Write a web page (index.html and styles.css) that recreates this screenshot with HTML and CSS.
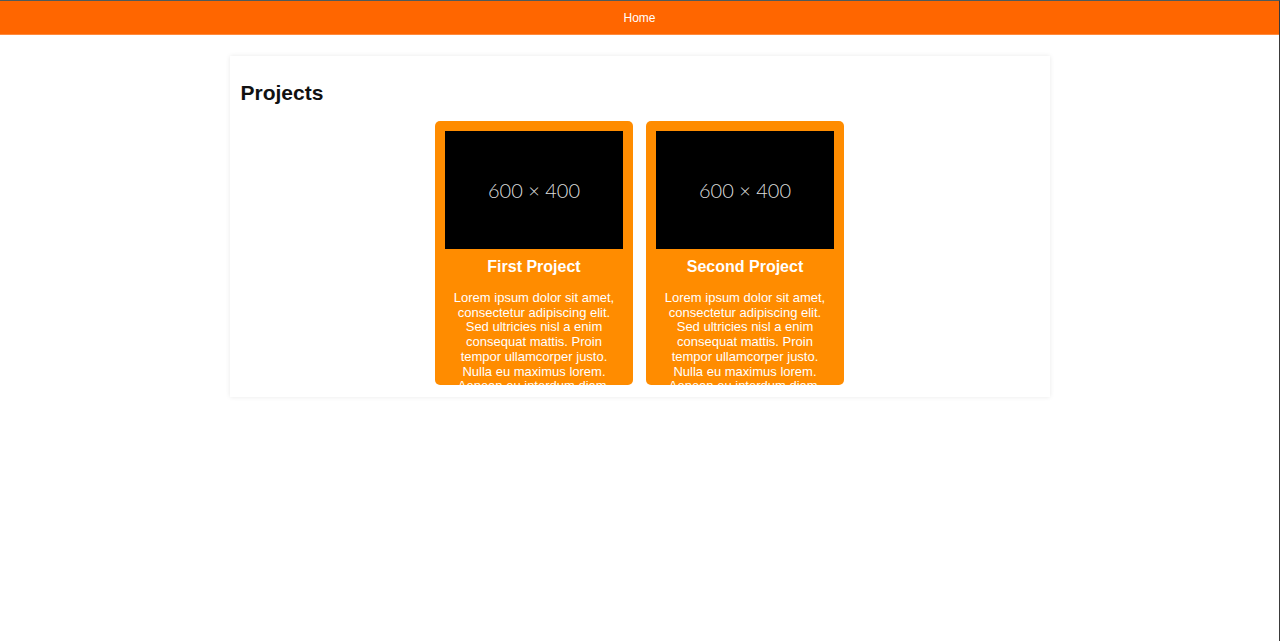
FILE: index.html
```html
<!DOCTYPE html>
<html lang="en">

<head>
  <meta charset="UTF-8">
  <title>Projects</title>
  <link rel="stylesheet" href="styles.css">
</head>

<body>

  <nav class="topnav">
    <a href="#" class="nav-link">Home</a>
  </nav>

  <main class="page">
    <h2>Projects</h2>

    <div class="project-list">
      <div class="project-card">
        <div class="thumb">600 &times; 400</div>
        <h3>First Project</h3>
        <p>Lorem ipsum dolor sit amet, consectetur adipiscing elit. Sed ultricies nisl a enim consequat mattis. Proin
          tempor ullamcorper justo. Nulla eu maximus lorem. Aenean eu interdum diam. Fusce vitae lacus nec mauris
          pretium tincidunt.</p>
      </div>

      <div class="project-card">
        <div class="thumb">600 &times; 400</div>
        <h3>Second Project</h3>
        <p>Lorem ipsum dolor sit amet, consectetur adipiscing elit. Sed ultricies nisl a enim consequat mattis. Proin
          tempor ullamcorper justo. Nulla eu maximus lorem. Aenean eu interdum diam. Fusce vitae lacus nec mauris
          pretium tincidunt.</p>
      </div>
    </div>
  </main>

</body>

</html>
```

FILE: styles.css
```css
html,
body {
  margin: 0;
  height: 100%;
}

body {
  font-family: "Liberation Sans", Arial, sans-serif;
  background: #fff;
  border-top: 1px solid #4f5b5c;
  border-right: 1px solid #3a3a3a;
  box-sizing: border-box;
}

.topnav {
  background: #ff6600;
  border-bottom: 1px solid #ff8a3d;
  height: 33px;
  display: flex;
  align-items: center;
  justify-content: center;
}

.nav-link {
  color: white;
  text-decoration: none;
  font-size: 12px;
}

.page {
  width: 820px;
  margin: 21px auto 0;
  padding: 1px 11px 12px;
  box-sizing: border-box;
  background: #fff;
  box-shadow: 0 0 5px rgba(0, 0, 0, 0.09);
}

.page h2 {
  font-size: 21px;
  margin: 24px 0 16px 0;
  color: #111;
}

.project-list {
  display: flex;
  justify-content: center;
  gap: 13px;
}

.project-card {
  width: 198px;
  height: 264px;
  box-sizing: border-box;
  padding: 10px;
  background: #ff8c00;
  border-radius: 5px;
  overflow: hidden;
  color: white;
  text-align: center;
}

.thumb {
  height: 118px;
  background: #000;
  color: #dcdcdc;
  font-family: Lato, "Open Sans", sans-serif;
  font-weight: 300;
  font-size: 20px;
  display: flex;
  align-items: center;
  justify-content: center;
}

.project-card h3 {
  font-size: 16px;
  margin: 9px 0 15px;
}

.project-card p {
  font-size: 13px;
  line-height: 14.7px;
  margin: 0;
}
```
